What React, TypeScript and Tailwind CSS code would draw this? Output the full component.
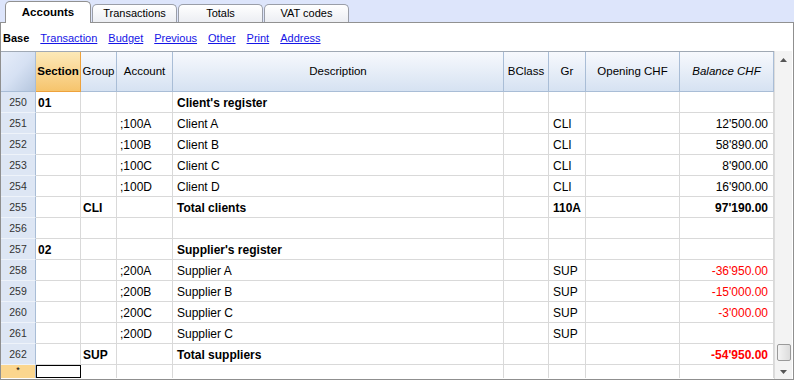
import React from 'react';

// Accounts table — spreadsheet-like grid with tabs and view links

type Row = {
  n: number;
  sec?: string;
  grp?: string;
  acc?: string;
  desc?: string;
  gr?: string;
  bal?: string;
  bold?: boolean;
  neg?: boolean;
};

const rows: Row[] = [
  { n: 250, sec: '01', desc: "Client's register", bold: true },
  { n: 251, acc: ';100A', desc: 'Client A', gr: 'CLI', bal: "12'500.00" },
  { n: 252, acc: ';100B', desc: 'Client B', gr: 'CLI', bal: "58'890.00" },
  { n: 253, acc: ';100C', desc: 'Client C', gr: 'CLI', bal: "8'900.00" },
  { n: 254, acc: ';100D', desc: 'Client D', gr: 'CLI', bal: "16'900.00" },
  { n: 255, grp: 'CLI', desc: 'Total clients', gr: '110A', bal: "97'190.00", bold: true },
  { n: 256 },
  { n: 257, sec: '02', desc: "Supplier's register", bold: true },
  { n: 258, acc: ';200A', desc: 'Supplier A', gr: 'SUP', bal: "-36'950.00", neg: true },
  { n: 259, acc: ';200B', desc: 'Supplier B', gr: 'SUP', bal: "-15'000.00", neg: true },
  { n: 260, acc: ';200C', desc: 'Supplier C', gr: 'SUP', bal: "-3'000.00", neg: true },
  { n: 261, acc: ';200D', desc: 'Supplier C', gr: 'SUP' },
  { n: 262, grp: 'SUP', desc: 'Total suppliers', bal: "-54'950.00", bold: true, neg: true },
];

const cols = 'grid grid-cols-[35px_45px_36px_56px_331px_45px_37px_94px_94px]';
const cell = 'h-[21px] pt-px border-r border-b border-[#d9d9d9] flex items-center overflow-hidden whitespace-nowrap';
const head =
  'h-[40px] border-r border-b border-[#a9bdd6] bg-gradient-to-b from-[#f7f9fd] to-[#d6e2f2] flex items-center justify-center text-[11.5px]';

function Tab({ label, active }: { label: string; active?: boolean }) {
  if (active) {
    return (
      <div className="relative z-10 ml-[5px] w-[86px] h-[22px] -mb-px bg-white border border-b-0 border-[#919191] rounded-t-[5px] flex items-center justify-center font-bold text-[11.5px] text-black">
        {label}
      </div>
    );
  }
  return (
    <div className="ml-[1px] w-[85px] h-[18px] bg-gradient-to-b from-white to-[#eceef3] border border-b-0 border-[#9a9ea8] rounded-t-[5px] flex items-center justify-center text-[11px] text-black">
      {label}
    </div>
  );
}

export default function App() {
  return (
    <div className="w-[794px] h-[380px] bg-white overflow-hidden font-['Liberation_Sans',Arial,sans-serif] text-black">
      {/* tab strip */}
      <div className="h-[23px] bg-[#dde5fb] border-b border-[#919191] flex items-end">
        <Tab label="Accounts" active />
        <Tab label="Transactions" />
        <Tab label="Totals" />
        <Tab label="VAT codes" />
      </div>

      <div className="h-[357px] border-x border-b border-[#8f8f8f] flex flex-col">
        {/* view links */}
        <div className="h-[28px] shrink-0 flex items-center pt-[3px] text-[11px]">
          <span className="ml-[2px] font-bold">Base</span>
          <div className="ml-[11px] flex gap-[11px] text-[#1515e6] underline">
            <span>Transaction</span>
            <span>Budget</span>
            <span>Previous</span>
            <span>Other</span>
            <span>Print</span>
            <span>Address</span>
          </div>
        </div>

        <div className="flex flex-1 overflow-hidden">
          <div className="w-[773px] border-t border-[#a0a9b4]">
            <div className={cols}>
              <div className="h-[40px] border-r border-b border-[#a9bdd6] bg-gradient-to-br from-[#e6edf9] via-[#d6e1f3] to-[#b5c6de]" />
              <div className="h-[40px] border-r border-b border-[#eea23c] bg-gradient-to-b from-[#fce9b8] to-[#f6c46c] flex items-center justify-center text-[11.5px] font-bold">
                Section
              </div>
              <div className={head}>Group</div>
              <div className={head}>Account</div>
              <div className={head}>Description</div>
              <div className={head}>BClass</div>
              <div className={head}>Gr</div>
              <div className={head}>Opening CHF</div>
              <div className={head + ' italic'}>Balance CHF</div>

              {rows.map((r) => {
                const b = r.bold ? ' font-bold' : '';
                return (
                  <React.Fragment key={r.n}>
                    <div className="h-[21px] pt-px border-r border-b border-r-[#a9bdd6] border-b-[#eef3fa] bg-[#dde6f4] flex items-center justify-center text-[10.5px] text-[#333]">
                      {r.n}
                    </div>
                    <div className={cell + ' pl-[2px] text-[12px]' + b}>{r.sec}</div>
                    <div className={cell + ' pl-[2px] text-[12px]' + b}>{r.grp}</div>
                    <div className={cell + ' pl-[3px] text-[12px]'}>{r.acc}</div>
                    <div className={cell + ' pl-[4px] text-[12px]' + b}>{r.desc}</div>
                    <div className={cell} />
                    <div className={cell + ' pl-[4px] text-[12px]' + b}>{r.gr}</div>
                    <div className={cell} />
                    <div
                      className={
                        cell + ' justify-end pr-[5px] text-[12px]' + b + (r.neg ? ' text-[#ff0000]' : '')
                      }
                    >
                      {r.bal}
                    </div>
                  </React.Fragment>
                );
              })}

              {/* new-row line */}
              <div className="h-[13px] border-r border-[#a9bdd6] bg-[#fbd68e] flex items-start justify-center text-[9px] leading-[10px]">
                *
              </div>
              <div className="h-[13px] border border-black" />
              <div className="h-[13px] border-r border-[#d9d9d9]" />
              <div className="h-[13px] border-r border-[#d9d9d9]" />
              <div className="h-[13px] border-r border-[#d9d9d9]" />
              <div className="h-[13px] border-r border-[#d9d9d9]" />
              <div className="h-[13px] border-r border-[#d9d9d9]" />
              <div className="h-[13px] border-r border-[#d9d9d9]" />
              <div className="h-[13px] border-r border-[#d9d9d9]" />
            </div>
          </div>

          {/* vertical scrollbar */}
          <div className="w-[18px] border-l border-[#dcdcdc] bg-[#f3f3f3] flex flex-col items-center">
            <div className="h-[17px] w-full flex items-center justify-center">
              <svg width="7" height="4" viewBox="0 0 7 4">
                <path d="M0 4 L3.5 0 L7 4 Z" fill="#555" />
              </svg>
            </div>
            <div className="flex-1" />
            <div className="w-[14px] h-[17px] mb-[3px] rounded-[2px] border border-[#9a9a9a] bg-gradient-to-r from-[#f4f4f4] to-[#dcdcdc]" />
            <div className="h-[15px] w-full flex items-center justify-center">
              <svg width="7" height="4" viewBox="0 0 7 4">
                <path d="M0 0 L3.5 4 L7 0 Z" fill="#555" />
              </svg>
            </div>
          </div>
        </div>
      </div>
    </div>
  );
}
